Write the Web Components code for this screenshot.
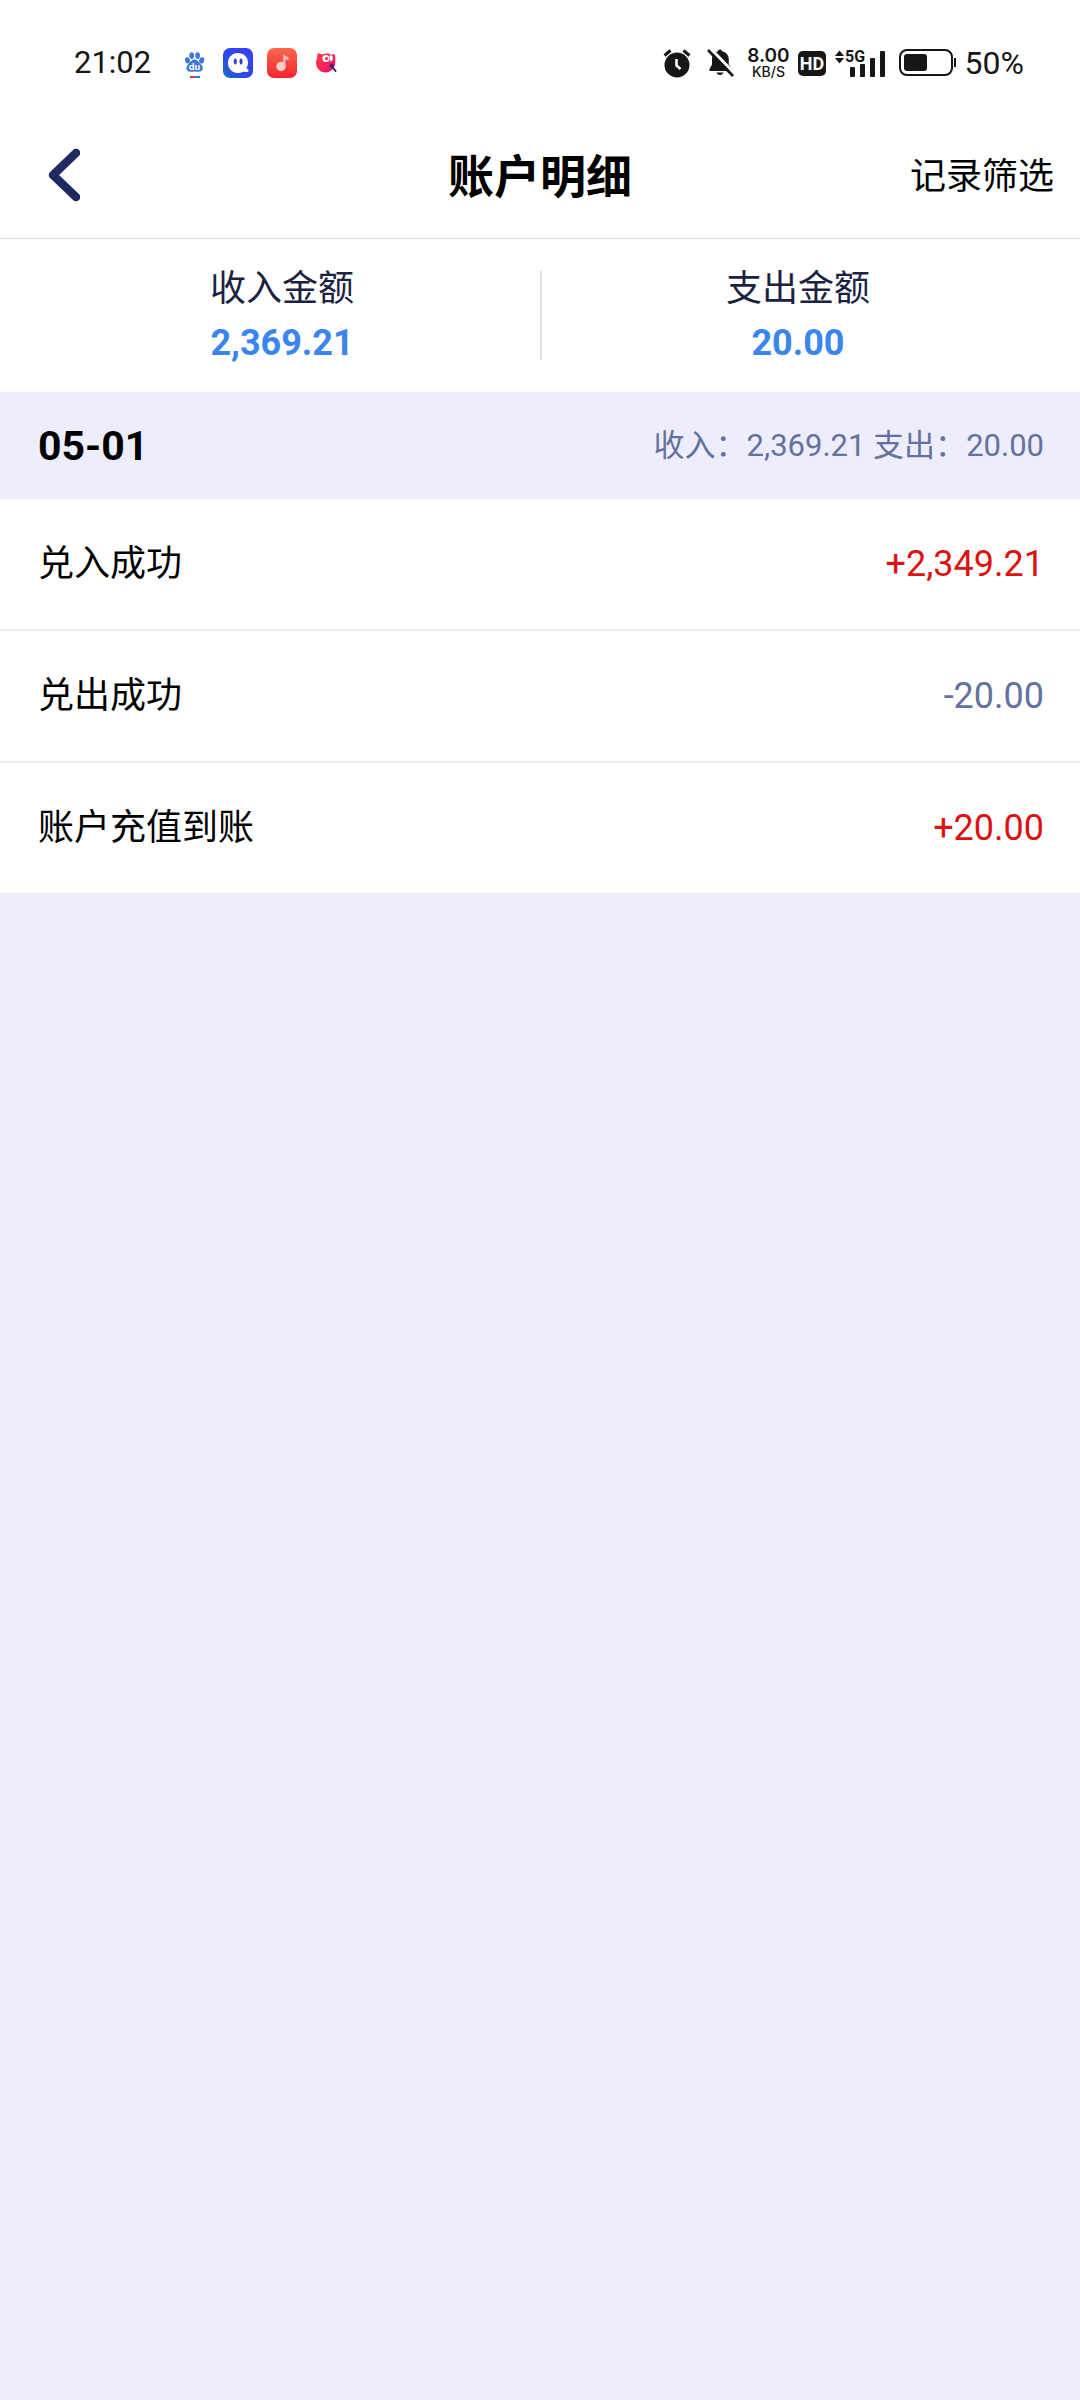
<!DOCTYPE html>
<html lang="zh-CN">
<head>
<meta charset="utf-8">
<meta name="viewport" content="width=device-width, initial-scale=1">
<title>账户明细</title>
<style>
html, body{
    margin: 0;
    padding: 0;
    min-height: 100vh;
    background-color: #ededfb;
    color: #000;
    font-family: Roboto, "Noto Sans CJK SC", sans-serif;
    font-size: 36px;
}
</style>
</head>
<body>

<status-bar time="21:02" battery="50"></status-bar>
<main>
    <page-header>
        账户明细
        <span slot="action">记录筛选</span>
    </page-header>
    <account-summary>
        <summary-item label="收入金额">2,369.21</summary-item>
        <summary-item label="支出金额">20.00</summary-item>
    </account-summary>
    <day-group date="05-01" income="2,369.21" expense="20.00">
        <record-item amount="+2,349.21">兑入成功</record-item>
        <record-item amount="-20.00">兑出成功</record-item>
        <record-item amount="+20.00">账户充值到账</record-item>
    </day-group>
</main>

<template id="status-bar">
<style>
:host{
    display: flex;
    align-items: center;
    justify-content: space-between;
    box-sizing: border-box;
    height: 112px;
    padding: 14px 56px 0 74px;
    background-color: #fff;
    color: #161616;
    font-size: 32px;
    line-height: 38px;
}
svg{
    display: block;
    flex: none;
}
.left, .right{
    display: flex;
    align-items: center;
}
#time{
    font-size: 31px;
    line-height: 40px;
}
.apps{
    display: flex;
    align-items: center;
    gap: 14px;
    margin-left: 28px;
}
.right{
    gap: 8px;
}
.speed{
    display: flex;
    flex-direction: column;
    align-items: center;
    margin-left: 4px;
    font-family: Inter, sans-serif;
    font-size: 14px;
    font-weight: 500;
    line-height: 14px;
}
.speed b{
    font-size: 19px;
    font-weight: 600;
    line-height: 18px;
}
.alarm{
    margin-right: 8px;
}
</style>
<div class="left">
    <span id="time"></span>
    <div class="apps">
        <svg width="30" height="30" viewBox="0 0 30 30">
            <g fill="#3f78d8">
                <ellipse cx="8.400" cy="12.500" rx="2.500" ry="3.200" transform="rotate(-14 8 12)"/>
                <ellipse cx="12.700" cy="7.600" rx="2.400" ry="3.400"/>
                <ellipse cx="18.600" cy="7.600" rx="2.400" ry="3.400"/>
                <ellipse cx="22.800" cy="12.500" rx="2.500" ry="3.200" transform="rotate(14 23 12)"/>
                <path d="M15.500 11.500c3 0 4 2.600 5.600 4.100 2 1.800 3 3 2.700 5-.3 2.200-2 3.200-4 3.200-1.500 0-2.700-.4-4.200-.4s-2.700.4-4.200.4c-2 0-3.800-1-4-3.200-.2-2 .8-3.200 2.600-5 1.600-1.500 2.500-4.100 5.500-4.100z"/>
            </g>
            <text x="15.500" y="22" text-anchor="middle" font-family="Inter, sans-serif" font-size="9" font-weight="700" fill="#fff">du</text>
            <path d="M11 29h5" stroke="#dd3b3b" stroke-width="2"/>
            <path d="M16 29h5" stroke="#3f78d8" stroke-width="2"/>
        </svg>
        <svg width="30" height="30" viewBox="0 0 30 30">
            <defs>
                <linearGradient id="blue" x1="0" y1="1" x2="1" y2="0">
                    <stop offset="0" stop-color="#1d6fb8"/>
                    <stop offset=".35" stop-color="#2b4de8"/>
                    <stop offset="1" stop-color="#3a3cf2"/>
                </linearGradient>
            </defs>
            <rect width="30" height="30" rx="7" fill="url(#blue)"/>
            <path d="M15 5c5.800 0 10 4 10 9.800 0 2.200-.6 4-1.700 5.600l1 .4c1.900.7 1.500 3.400-.5 3.300l-3.800-.3A10 10 0 0 1 15 25C9 25 5 20.600 5 15S9 5 15 5z" fill="#fff"/>
            <ellipse cx="12.300" cy="13.500" rx="1.500" ry="3" fill="#2b3fd0"/>
            <ellipse cx="18" cy="13.500" rx="1.500" ry="3" fill="#2b3fd0"/>
        </svg>
        <svg width="30" height="30" viewBox="0 0 30 30">
            <defs>
                <linearGradient id="red" x1="0" y1="0" x2="0" y2="1">
                    <stop offset="0" stop-color="#f9694f"/>
                    <stop offset="1" stop-color="#f8222d"/>
                </linearGradient>
            </defs>
            <rect width="30" height="30" rx="7" fill="url(#red)"/>
            <circle cx="14" cy="18.500" r="4.700" fill="#ffd3cd"/>
            <path d="M16.200 18V6.500l5.300 3v3l-3-1.400V18z" fill="#ffc2b8"/>
        </svg>
        <svg width="30" height="30" viewBox="0 0 30 30">
            <defs>
                <linearGradient id="pink" x1="0" y1="0" x2="1" y2="1">
                    <stop offset="0" stop-color="#ff3d3d"/>
                    <stop offset=".6" stop-color="#f5235a"/>
                    <stop offset="1" stop-color="#c01a70"/>
                </linearGradient>
            </defs>
            <path d="M7 5l4.500 1.500c3-1.500 6.500-1.200 9 .3l3-.8c.8 2 1 3.600.7 5.500 1.300 7-3.700 13-9.700 13C9 24.500 5 20 5 14.500c0-1.700.4-3 1.200-4.300C6 8.500 6.200 6.700 7 5z" fill="url(#pink)"/>
            <circle cx="15" cy="10.500" r="3.600" fill="#fff"/>
            <path d="M18.500 7.500c2-.6 3.600.6 3.400 2.600-.1 1.700-1 3-2.400 3.700z" fill="#fff"/>
            <circle cx="15.500" cy="10.500" r="1.500" fill="#e01f50"/>
            <circle cx="20.500" cy="17.500" r="2" fill="#4d1d78"/>
            <path d="M21.500 19l3 4" stroke="#4a1a50" stroke-width="2" stroke-linecap="round"/>
        </svg>
    </div>
</div>
<div class="right">
    <svg class="alarm" width="28" height="30" viewBox="0 0 28 30">
        <circle cx="14" cy="17" r="12.500" fill="#161616"/>
        <path d="M1.500 7.500l6-5M26.500 7.500l-6-5" stroke="#161616" stroke-width="3"/>
        <path d="M13.500 11v6.500l4 3.500" fill="none" stroke="#fff" stroke-width="2.600"/>
    </svg>
    <svg width="28" height="30" viewBox="0 0 28 30">
        <path d="M13 1.500c1.200 0 2 .8 2 1.800 4 .8 6.800 4 6.800 8.200v5l3.200 4.500v2H2.500v-2L5 16.500v-5c0-4 2.300-7.400 6-8.200 0-1 .8-1.800 2-1.800zM9.500 24.500h7c-.5 1.600-1.700 2.500-3.500 2.500s-3-.9-3.500-2.500z" fill="#161616"/>
        <path d="M3 0l25 26" stroke="#fff" stroke-width="3"/>
        <path d="M1 2l25 26" stroke="#161616" stroke-width="2.600"/>
    </svg>
    <div class="speed"><b>8.00</b><span>KB/S</span></div>
    <svg width="28" height="26" viewBox="0 0 28 26">
        <rect y="1" width="28" height="25" rx="5" fill="#161616"/>
        <text x="14" y="20" text-anchor="middle" font-family="Roboto, sans-serif" font-size="18" font-weight="700" fill="#fff">HD</text>
    </svg>
    <svg width="57" height="36" viewBox="0 -4 57 36">
        <path d="M1 7l4.500-5.500L10 7zM1 9h9l-4.500 5.500z" fill="#161616"/>
        <text x="11" y="13" font-family="Roboto, sans-serif" font-size="16" font-weight="700" fill="#161616">5G</text>
        <g fill="#161616">
            <rect x="16" y="18" width="5" height="10" rx="1"/>
            <rect x="26" y="15" width="5" height="13" rx="1"/>
            <rect x="36" y="9" width="5" height="19" rx="1"/>
            <rect x="46" y="2" width="5" height="26" rx="1"/>
        </g>
    </svg>
    <svg width="58" height="30" viewBox="0 0 58 30">
        <rect x="1" y="2" width="52" height="25" rx="7" fill="none" stroke="#161616" stroke-width="2"/>
        <rect x="5" y="6" width="23" height="17" rx="3" fill="#161616"/>
        <path d="M56 10v9" stroke="#161616" stroke-width="2"/>
    </svg>
    <span id="battery"></span>
</div>
</template>

<template id="page-header">
<style>
:host{
    display: grid;
    grid-template-columns: 1fr auto 1fr;
    align-items: center;
    box-sizing: border-box;
    height: 127px;
    padding: 0 26px;
    background-color: #fff;
    border-bottom: 1px solid #dcdcdc;
}
h1{
    margin: 0;
    padding-top: 4px;
    font-size: 46px;
    font-weight: 700;
    line-height: 64px;
}
button{
    padding: 0;
    border: none;
    background: none;
    color: inherit;
    font: inherit;
    line-height: 52px;
    cursor: pointer;
}
.back{
    justify-self: start;
    padding: 0 20px;
}
.action{
    justify-self: end;
    padding-top: 4px;
}
svg{
    display: block;
}
</style>
<button class="back" aria-label="返回">
    <svg width="34" height="54" viewBox="0 0 34 54">
        <path d="M30 5L7 27l23 22" fill="none" stroke="#1f2a60" stroke-width="8.500" stroke-linecap="round" stroke-linejoin="round"/>
    </svg>
</button>
<h1><slot></slot></h1>
<button class="action"><slot name="action"></slot></button>
</template>

<template id="account-summary">
<style>
:host{
    display: flex;
    align-items: center;
    position: relative;
    padding: 22px 24px 18px;
    background-color: #fff;
}
/* line between the two halves */
:host::after{
    content: "";
    position: absolute;
    top: 32px;
    bottom: 32px;
    left: 50%;
    width: 2px;
    background-color: #dcdfe6;
}
::slotted(*){
    flex: 1;
}
</style>
<slot></slot>
</template>

<template id="summary-item">
<style>
:host{
    display: block;
    text-align: center;
}
.label{
    color: #1c2244;
    line-height: 56px;
}
.value{
    color: #3a85ee;
    font-weight: 700;
    line-height: 52px;
    padding-bottom: 5px;
}
</style>
<div class="label" id="label"></div>
<div class="value"><slot></slot></div>
</template>

<template id="day-group">
<style>
:host{
    display: block;
}
header{
    display: flex;
    align-items: center;
    justify-content: space-between;
    height: 107px;
    padding: 0 36px 0 38px;
}
h2{
    margin: 0;
    font-size: 41px;
    font-weight: 700;
}
p{
    margin: 0;
    color: #64729f;
    font-size: 31px;
    line-height: 52px;
}
</style>
<header>
    <h2 id="date"></h2>
    <p>收入：<span id="income"></span> 支出：<span id="expense"></span></p>
</header>
<div role="list"><slot></slot></div>
</template>

<template id="record-item">
<style>
:host{
    display: flex;
    align-items: center;
    justify-content: space-between;
    box-sizing: border-box;
    height: 132px;
    padding: 0 36px 0 38px;
    background-color: #fff;
    border-bottom: 2px solid #eee;
    line-height: 52px;
}
.amount{
    color: #64729f;
}
.amount.in{
    color: #dc1212;
}
</style>
<span><slot></slot></span>
<span class="amount" id="amount"></span>
</template>

<script>
// clones the template named after the tag and copies each attribute into the element with that id
class BaseElement extends HTMLElement {
    constructor(){
        super();
        const template = document.getElementById(this.localName);
        this.attachShadow({mode:'open'});
        this.shadowRoot.appendChild(template.content.cloneNode(true));
    }
    attributeChangedCallback(name, oldValue, newValue) {
        this.shadowRoot.getElementById(name).textContent = newValue;
    }
}

class StatusBar extends BaseElement {
    attributeChangedCallback(name, oldValue, newValue) {
        super.attributeChangedCallback(name, oldValue, name === 'battery' ? newValue + '%' : newValue);
    }
    static get observedAttributes() { return ['time', 'battery']; }
}

class PageHeader extends BaseElement {}

class AccountSummary extends BaseElement {}

class SummaryItem extends BaseElement {
    static get observedAttributes() { return ['label']; }
}

class DayGroup extends BaseElement {
    static get observedAttributes() { return ['date', 'income', 'expense']; }
}

class RecordItem extends BaseElement {
    connectedCallback() {
        this.setAttribute('role', 'listitem');
    }
    attributeChangedCallback(name, oldValue, newValue) {
        super.attributeChangedCallback(name, oldValue, newValue);
        this.shadowRoot.getElementById('amount').classList.toggle('in', newValue.startsWith('+'));
    }
    static get observedAttributes() { return ['amount']; }
}

window.customElements.define('status-bar', StatusBar);
window.customElements.define('page-header', PageHeader);
window.customElements.define('account-summary', AccountSummary);
window.customElements.define('summary-item', SummaryItem);
window.customElements.define('day-group', DayGroup);
window.customElements.define('record-item', RecordItem);
</script>
</body>
</html>
